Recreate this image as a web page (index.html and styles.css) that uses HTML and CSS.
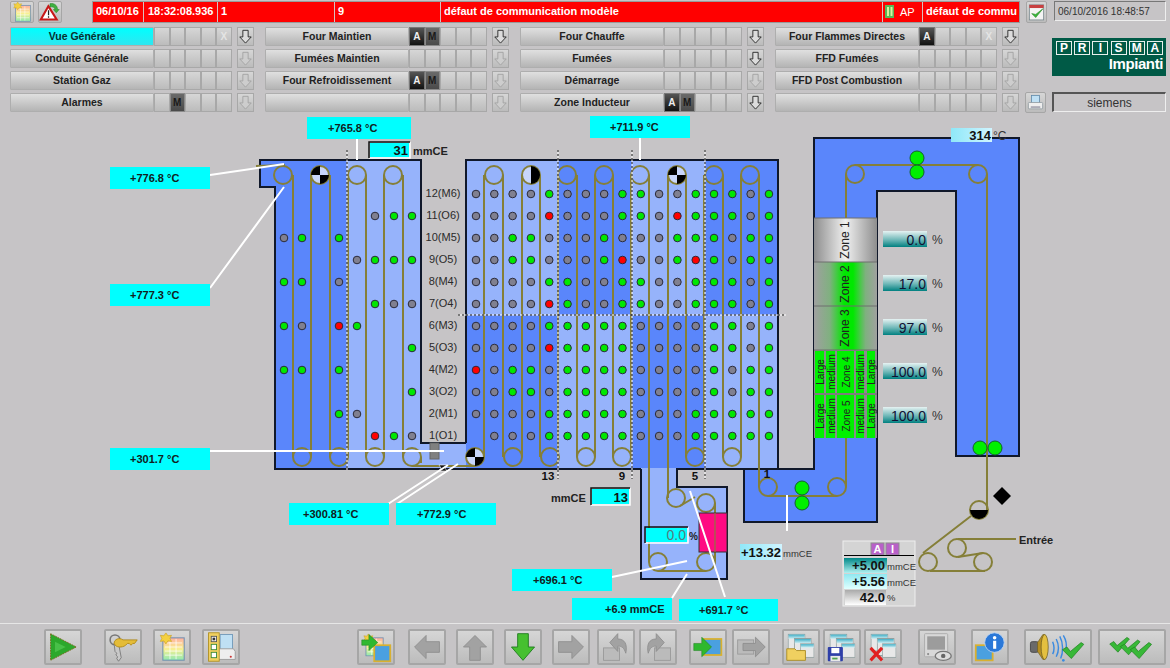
FILE: index.html
```html
<!DOCTYPE html>
<html lang="fr">
<head>
<meta charset="utf-8">
<title>Vue Générale</title>
<link rel="stylesheet" href="styles.css">
</head>
<body>
<svg class="defs" width="0" height="0" aria-hidden="true">
  <defs>
    <symbol id="down" viewBox="0 0 17 19"><path d="M5.5 2.5h6v7.5h3.5l-6.5 7-6.5-7h3.5z"/></symbol>
    <symbol id="tick" viewBox="0 0 26 20"><path d="M1 9l5-3 4 5L22 1l3 2L11 19z" fill="#38b838" stroke="#1f801f" stroke-width=".8"/></symbol>
    <linearGradient id="gZ1" x1="0" x2="1" y1="0" y2="0"><stop offset="0" stop-color="#8e8e8e"/><stop offset=".5" stop-color="#f0f0f0"/><stop offset="1" stop-color="#8e8e8e"/></linearGradient>
    <linearGradient id="gZ2" x1="0" x2="1" y1="0" y2="0"><stop offset="0" stop-color="#a0a0a0"/><stop offset=".25" stop-color="#80b080"/><stop offset=".48" stop-color="#00e800"/><stop offset=".62" stop-color="#00e800"/><stop offset=".82" stop-color="#80b080"/><stop offset="1" stop-color="#a0a0a0"/></linearGradient>
    <linearGradient id="gBar" x1="0" x2="0" y1="0" y2="1"><stop offset="0" stop-color="#e6f2f2"/><stop offset=".55" stop-color="#6fb8b8"/><stop offset="1" stop-color="#008080"/></linearGradient>
    <linearGradient id="gTeal" x1="0" x2="0" y1="0" y2="1"><stop offset="0" stop-color="#008888"/><stop offset="1" stop-color="#b0f0f0"/></linearGradient>
    <linearGradient id="gPale" x1="0" x2="0" y1="0" y2="1"><stop offset="0" stop-color="#90e8f0"/><stop offset="1" stop-color="#e0ffff"/></linearGradient>
    <linearGradient id="gGrey" x1="0" x2="0" y1="0" y2="1"><stop offset="0" stop-color="#aaaaaa"/><stop offset="1" stop-color="#ffffff"/></linearGradient>
    <linearGradient id="gSky" x1="0" x2="1" y1="0" y2="0"><stop offset="0" stop-color="#8fe8f8"/><stop offset="1" stop-color="#d0f4ff"/></linearGradient>
    <linearGradient id="gRain" x1="0" x2="0" y1="0" y2="1"><stop offset="0" stop-color="#ffb0a0"/><stop offset=".5" stop-color="#f8f090"/><stop offset="1" stop-color="#90e8b0"/></linearGradient>
    <linearGradient id="gWin" x1="0" x2="0" y1="0" y2="1"><stop offset="0" stop-color="#40b0c8"/><stop offset="1" stop-color="#d8f0f4"/></linearGradient>
    <symbol id="win" viewBox="0 0 20 20"><rect x=".5" y=".5" width="19" height="19" fill="#e8e8e8" stroke="#8a9a9a"/><rect x="1" y="1" width="18" height="5" fill="url(#gWin)"/></symbol>
    <symbol id="sheet" viewBox="0 0 26 28"><rect x="4" y="5" width="21" height="22" fill="url(#gRain)" stroke="#6f8fb0"/><path d="M6 10h17M6 14h17M6 18h17M6 22h17M11 6v20M17 6v20" stroke="#fff" fill="none" stroke-width=".7"/><path d="M7 0l2 3 3.500-.5-1.500 3 1.500 3-3.500-.5-2 3-2-3-3.500.5 1.500-3-1.500-3 3.500.5z" fill="#f4d040" stroke="#c8a020" stroke-width=".6"/></symbol>
  </defs>
</svg>

<header class="top">
  <div class="status">
    <button class="tool tiny first" aria-label="Liste">
      <svg viewBox="0 0 26 28"><use href="#sheet"/></svg>
    </button>
    <button class="tool tiny" aria-label="Alarme">
      <svg viewBox="0 0 24 24"><path d="M10 5L20 21H1z" fill="#fff" stroke="#c81818" stroke-width="2.500"/><path d="M9.500 10h1.500v6H9.500zM9.500 17h1.500v2H9.500z" fill="#222"/><path d="M12 2c5-1 9 2 9 7h2l-3.500 4-3.500-4h2c0-2-3-4-6-3z" fill="#40b040" stroke="#1f7f1f" stroke-width=".6"/></svg>
    </button>
    <div class="alarm">
      <span class="c1">06/10/16</span><span class="c2">18:32:08.936</span><span class="c3">1</span><span class="c4">9</span><span class="c5">défaut de communication modèle</span>
      <span class="c6"><svg class="plc" viewBox="0 0 9 15"><rect width="9" height="13" fill="#58b858"/><rect x="2" y="2" width="2" height="9" fill="#d8f0a0"/><rect x="5.500" y="2" width="2" height="9" fill="#d8f0a0"/></svg>AP</span>
      <span class="c7">défaut de commu</span>
    </div>
    <button class="tool tiny check" aria-label="Valider">
      <svg viewBox="0 0 24 24"><rect x="3" y="3" width="18" height="19" fill="#f4f4f4" stroke="#7a8a90"/><rect x="3" y="3" width="18" height="4" fill="#c84040"/><path d="M6 14l5 5 9-11-9 7z" fill="#38b838" stroke="#1f801f" stroke-width=".7"/></svg>
    </button>
    <div class="clock">06/10/2016 18:48:57</div>
  </div>

  <div class="lower">
    <nav class="nav">
      <div class="entry"><a class="name on">Vue Générale</a><span class="cell"></span><span class="cell"></span><span class="cell"></span><span class="cell"></span><span class="cell x">X</span><span class="arrow on"><svg><use href="#down"/></svg></span></div>
      <div class="entry"><a class="name">Four Maintien</a><span class="cell a">A</span><span class="cell m">M</span><span class="cell"></span><span class="cell"></span><span class="cell"></span><span class="arrow on"><svg><use href="#down"/></svg></span></div>
      <div class="entry"><a class="name">Four Chauffe</a><span class="cell"></span><span class="cell"></span><span class="cell"></span><span class="cell"></span><span class="cell"></span><span class="arrow on"><svg><use href="#down"/></svg></span></div>
      <div class="entry"><a class="name">Four Flammes Directes</a><span class="cell a">A</span><span class="cell"></span><span class="cell"></span><span class="cell"></span><span class="cell x">X</span><span class="arrow on"><svg><use href="#down"/></svg></span></div>

      <div class="entry"><a class="name">Conduite Générale</a><span class="cell"></span><span class="cell"></span><span class="cell"></span><span class="cell"></span><span class="cell"></span><span class="arrow"><svg><use href="#down"/></svg></span></div>
      <div class="entry"><a class="name">Fumées Maintien</a><span class="cell"></span><span class="cell"></span><span class="cell"></span><span class="cell"></span><span class="cell"></span><span class="arrow"><svg><use href="#down"/></svg></span></div>
      <div class="entry"><a class="name">Fumées</a><span class="cell"></span><span class="cell"></span><span class="cell"></span><span class="cell"></span><span class="cell"></span><span class="arrow on"><svg><use href="#down"/></svg></span></div>
      <div class="entry"><a class="name">FFD Fumées</a><span class="cell"></span><span class="cell"></span><span class="cell"></span><span class="cell"></span><span class="cell"></span><span class="arrow"><svg><use href="#down"/></svg></span></div>

      <div class="entry"><a class="name">Station Gaz</a><span class="cell"></span><span class="cell"></span><span class="cell"></span><span class="cell"></span><span class="cell"></span><span class="arrow"><svg><use href="#down"/></svg></span></div>
      <div class="entry"><a class="name">Four Refroidissement</a><span class="cell a">A</span><span class="cell m">M</span><span class="cell"></span><span class="cell"></span><span class="cell"></span><span class="arrow"><svg><use href="#down"/></svg></span></div>
      <div class="entry"><a class="name">Démarrage</a><span class="cell"></span><span class="cell"></span><span class="cell"></span><span class="cell"></span><span class="cell"></span><span class="arrow"><svg><use href="#down"/></svg></span></div>
      <div class="entry"><a class="name">FFD Post Combustion</a><span class="cell"></span><span class="cell"></span><span class="cell"></span><span class="cell"></span><span class="cell"></span><span class="arrow"><svg><use href="#down"/></svg></span></div>

      <div class="entry"><a class="name">Alarmes</a><span class="cell"></span><span class="cell m">M</span><span class="cell"></span><span class="cell"></span><span class="cell"></span><span class="arrow"><svg><use href="#down"/></svg></span></div>
      <div class="entry"><a class="name"></a><span class="cell"></span><span class="cell"></span><span class="cell"></span><span class="cell"></span><span class="cell"></span><span class="arrow"><svg><use href="#down"/></svg></span></div>
      <div class="entry"><a class="name">Zone Inducteur</a><span class="cell a">A</span><span class="cell m">M</span><span class="cell"></span><span class="cell"></span><span class="cell"></span><span class="arrow on"><svg><use href="#down"/></svg></span></div>
      <div class="entry"><a class="name"></a><span class="cell"></span><span class="cell"></span><span class="cell"></span><span class="cell"></span><span class="cell"></span><span class="arrow"><svg><use href="#down"/></svg></span></div>
    </nav>
    <div class="side">
      <div class="logo">
        <div class="logo-top"><span>P</span><span>R</span><span>I</span><span>S</span><span>M</span><span>A</span></div>
        <div class="logo-sub">Impianti</div>
      </div>
      <div class="printer-row">
        <button class="tool tiny" aria-label="Imprimer">
          <svg viewBox="0 0 24 24"><rect x="7" y="3" width="10" height="10" fill="#bfe0f4" stroke="#5f88a8"/><rect x="3" y="12" width="18" height="8" rx="1" fill="#eee" stroke="#8f9aa0"/><rect x="6" y="17" width="12" height="1.500" fill="#889"/></svg>
        </button>
        <div class="user">siemens</div>
      </div>
    </div>
  </div>
</header>

<main class="plant">
  <svg class="scheme" viewBox="0 115 1170 508" width="1170" height="508">
    <!-- furnace shells -->
    <path class="dark" d="M260 160H421V443H466V160H778V469H744V522H877V191H956V456H1019V138H814V469H778V469H677V487H727V579H641V469H275V187H260z"/>
    <path class="light" d="M347 160H421V443H466V469H347z"/>
    <rect class="light" x="466" y="160" width="92" height="155"/>
    <rect class="light" x="632" y="160" width="73" height="155"/>
    <rect class="light" x="558" y="315" width="74" height="154"/>
    <rect class="light" x="705" y="315" width="73" height="154"/>
    <path class="light" d="M641 468H677V487H727V579H641z"/>
    <path class="shell" d="M347 160H260V187H275V469H466M466 443H421V160H347M466 443V160H778V469H744V522H877V191H956V456H1019V138H814V469H778M641 469V579H727V487H677V469H744M466 469H641M558 469"/>

    <!-- strip path -->
    <g class="strip">
      <path d="M256 166L285 165M293 175V457M311 175V457M330 175V457M348 175V457M366 175V457M384 175V457M403 175V457M421 457V463"/>
      <path d="M412 466H475"/>
      <path d="M484 457V175M503 175V457M522 457V175M540 175V457M558 457V175M577 175V457M595 457V175M613 175V457M631 457V175"/>
      <path d="M649 175V562M668 175V498M686 175V457M704 457V175M723 175V457M741 457V175M759 175V487"/>
      <path d="M695 497L680 506M658 571H706M715 562V503"/>
      <path d="M768 496H837M846 487V174M855 165H978M987 174V510"/>
      <path d="M971 516L923 553M930 571H985M958 557L983 553M958 539H1016"/>
      <circle cx="283" cy="175" r="9"/><circle cx="357" cy="175" r="9"/><circle cx="393" cy="175" r="9"/>
      <circle cx="302" cy="457" r="9"/><circle cx="339" cy="457" r="9"/><circle cx="375" cy="457" r="9"/><circle cx="412" cy="457" r="9"/>
      <circle cx="494" cy="175" r="9"/><circle cx="567" cy="175" r="9"/><circle cx="604" cy="175" r="9"/><circle cx="640" cy="175" r="9"/><circle cx="714" cy="175" r="9"/><circle cx="750" cy="175" r="9"/>
      <circle cx="513" cy="457" r="9"/><circle cx="550" cy="457" r="9"/><circle cx="586" cy="457" r="9"/><circle cx="622" cy="457" r="9"/><circle cx="695" cy="457" r="9"/><circle cx="732" cy="457" r="9"/>
      <circle cx="676" cy="498" r="9"/><circle cx="706" cy="503" r="9"/><circle cx="658" cy="562" r="9"/><circle cx="706" cy="562" r="9"/>
      <circle cx="768" cy="487" r="9"/><circle cx="837" cy="487" r="9"/><circle cx="855" cy="174" r="9"/><circle cx="978" cy="174" r="9"/>
      <circle cx="979" cy="510" r="9"/><circle cx="928" cy="562" r="9"/><circle cx="983" cy="562" r="9"/><circle cx="957" cy="548" r="9"/>
    </g>

    <!-- state rollers -->
    <g class="roll">
      <circle cx="320" cy="175" r="9"/><path class="blk" d="M320 175V166A9 9 0 0 0 311 175zM320 175V184A9 9 0 0 0 329 175z"/>
      <circle cx="677" cy="175" r="9"/><path class="blk" d="M677 175V166A9 9 0 0 0 668 175zM677 175V184A9 9 0 0 0 686 175z"/>
      <circle cx="475" cy="457" r="9"/><path class="blk" d="M475 457V448A9 9 0 0 0 466 457zM475 457V466A9 9 0 0 0 484 457z"/>
      <circle cx="531" cy="175" r="9"/><path class="blk" d="M531 166A9 9 0 0 1 531 184z"/>
      <path class="blk" d="M970 510H988A9 9 0 0 1 970 510z"/>
    </g>

    <rect class="stub" x="430" y="443" width="9" height="16"/>
    <path class="mark" d="M439 465h8l-2 3 2 3h-8l2-3z"/>
    <rect class="pink" x="699" y="513" width="28" height="39"/>
    <path class="strip thin" d="M715 513V552"/>

    <!-- lamps -->
    <g id="lamps"></g>

    <!-- section dividers -->
    <g class="rule w"><path d="M347 150V470M558 150V479M632 150V479M705 150V479M458 315H786"/></g>
    <g class="rule k"><path d="M347 150V470M558 150V479M632 150V479M705 150V479M458 315H786"/></g>

    <!-- big lamps, diamond -->
    <g class="big">
      <circle cx="917" cy="158" r="7"/><circle cx="917" cy="172" r="7"/><circle cx="980" cy="448" r="7"/><circle cx="995" cy="448" r="7"/><circle cx="802" cy="488" r="7"/><circle cx="802" cy="503" r="7"/>
    </g>
    <path class="ink" d="M1002 487l9 9-9 9-9-9z"/>

    <!-- zones -->
    <g class="zones">
      <rect x="814" y="218" width="63" height="44" fill="url(#gZ1)"/>
      <rect x="814" y="262" width="63" height="44" fill="url(#gZ2)"/>
      <rect x="814" y="306" width="63" height="44" fill="url(#gZ2)"/>
      <rect class="gap" x="814" y="350" width="63" height="88"/>
      <g class="lime">
        <rect x="815" y="351" width="9" height="42"/><rect x="826" y="351" width="9" height="42"/><rect x="837" y="351" width="17" height="42"/><rect x="856" y="351" width="8" height="42"/><rect x="867" y="351" width="8" height="42"/>
        <rect x="815" y="395" width="9" height="43"/><rect x="826" y="395" width="9" height="43"/><rect x="837" y="395" width="17" height="43"/><rect x="856" y="395" width="8" height="43"/><rect x="867" y="395" width="8" height="43"/>
      </g>
      <path class="seam" d="M814 218H877M814 262H877M814 306H877M814 350H877M814 394H877"/>
      <g class="ztext big-z">
        <text x="845" y="240" transform="rotate(-90 845 240)">Zone 1</text>
        <text x="845" y="284" transform="rotate(-90 845 284)">Zone 2</text>
        <text x="845" y="328" transform="rotate(-90 845 328)">Zone 3</text>
      </g>
      <g class="ztext">
        <text x="820" y="372" transform="rotate(-90 820 372)">Large</text><text x="831" y="372" transform="rotate(-90 831 372)">medium</text><text x="846" y="372" transform="rotate(-90 846 372)">Zone 4</text><text x="860" y="372" transform="rotate(-90 860 372)">medium</text><text x="871" y="372" transform="rotate(-90 871 372)">Large</text>
        <text x="820" y="416" transform="rotate(-90 820 416)">Large</text><text x="831" y="416" transform="rotate(-90 831 416)">medium</text><text x="846" y="416" transform="rotate(-90 846 416)">Zone 5</text><text x="860" y="416" transform="rotate(-90 860 416)">medium</text><text x="871" y="416" transform="rotate(-90 871 416)">Large</text>
      </g>
    </g>

    <!-- zone percentages -->
    <g class="pct">
      <rect x="883" y="231" width="44" height="16" fill="url(#gBar)"/><text class="val" x="926" y="240">0.0</text><text class="unit" x="932" y="240">%</text>
      <rect x="883" y="275" width="44" height="16" fill="url(#gBar)"/><text class="val" x="926" y="284">17.0</text><text class="unit" x="932" y="284">%</text>
      <rect x="883" y="319" width="44" height="16" fill="url(#gBar)"/><text class="val" x="926" y="328">97.0</text><text class="unit" x="932" y="328">%</text>
      <rect x="883" y="363" width="44" height="16" fill="url(#gBar)"/><text class="val" x="926" y="372">100.0</text><text class="unit" x="932" y="372">%</text>
      <rect x="883" y="407" width="44" height="16" fill="url(#gBar)"/><text class="val" x="926" y="416">100.0</text><text class="unit" x="932" y="416">%</text>
    </g>

    <!-- level names -->
    <g class="levels">
      <text x="443" y="193">12(M6)</text><text x="443" y="215">11(O6)</text><text x="443" y="237">10(M5)</text><text x="443" y="259">9(O5)</text><text x="443" y="281">8(M4)</text><text x="443" y="303">7(O4)</text><text x="443" y="325">6(M3)</text><text x="443" y="347">5(O3)</text><text x="443" y="369">4(M2)</text><text x="443" y="391">3(O2)</text><text x="443" y="413">2(M1)</text><text x="443" y="435">1(O1)</text>
    </g>

    <!-- leaders -->
    <path class="leader" d="M210 175L284 164M210 288L284 187M357 139V160M640 138V160M210 451H444M388 504L448 465M397 504L458 464M612 577L687 561M672 598L687 574M725 597L690 491M787 495V531"/>

    <!-- cyan tags -->
    <g class="tag">
      <rect x="307" y="117" width="104" height="22"/><text x="328" y="128">+765.8 °C</text>
      <rect x="110" y="167" width="100" height="22"/><text x="130" y="178">+776.8 °C</text>
      <rect x="110" y="284" width="100" height="22"/><text x="130" y="295">+777.3 °C</text>
      <rect x="590" y="116" width="100" height="22"/><text x="610" y="127">+711.9 °C</text>
      <rect x="110" y="448" width="100" height="22"/><text x="130" y="459">+301.7 °C</text>
      <rect x="289" y="503" width="100" height="22"/><text x="303" y="514">+300.81 °C</text>
      <rect x="396" y="503" width="100" height="22"/><text x="417" y="514">+772.9 °C</text>
      <rect x="512" y="569" width="100" height="22"/><text x="533" y="580">+696.1 °C</text>
      <rect x="572" y="598" width="100" height="22"/><text x="605" y="609">+6.9 mmCE</text>
      <rect x="679" y="599" width="99" height="22"/><text x="699" y="610">+691.7 °C</text>
    </g>

    <!-- readouts -->
    <g class="box"><path class="lo" d="M369 158H410V142"/><rect x="370" y="143" width="39" height="14"/><path class="hi" d="M369 158V142H410"/></g>
    <text class="num" x="408" y="150">31</text><text class="tiny-b" x="413" y="151">mmCE</text>

    <g class="box"><path class="lo" d="M591 505H630V488"/><rect x="592" y="489" width="37" height="15"/><path class="hi" d="M591 505V488H630"/></g>
    <text class="num" x="628" y="497">13</text><text class="tiny-b" x="551" y="498">mmCE</text>

    <g class="box"><path class="lo" d="M645 543H688V527"/><rect x="646" y="528" width="41" height="14"/><path class="hi" d="M645 543V527H688"/></g>
    <text class="num faint" x="686" y="535">0.0</text><text class="tiny-b small" x="689" y="536">%</text>

    <rect x="740" y="544" width="42" height="16" fill="url(#gSky)"/><text class="num" x="781" y="552">+13.32</text><text class="tiny-r" x="783" y="553">mmCE</text>
    <rect x="951" y="128" width="41" height="14" fill="url(#gSky)"/><text class="num" x="991" y="135">314</text><text class="unit" x="993" y="136">°C</text>

    <g class="cut"><text x="548" y="476">13</text><text x="622" y="476">9</text><text x="695" y="476">5</text><text x="767" y="474">1</text></g>
    <text class="tiny-b entree" x="1019" y="540">Entrée</text>

    <!-- small control panel -->
    <rect class="panel" x="843" y="541" width="72" height="65"/>
    <g class="mode"><rect x="871" y="543" width="13" height="12"/><rect x="886" y="543" width="13" height="12"/><text x="877.500" y="549">A</text><text x="892.500" y="549">I</text></g>
    <path class="ink-line" d="M844 555.500H914"/>
    <rect x="844" y="558" width="43" height="15" fill="url(#gTeal)"/>
    <rect x="844" y="574" width="43" height="15" fill="url(#gPale)"/>
    <rect x="845" y="590" width="41" height="15" fill="url(#gGrey)"/>
    <text class="num" x="885" y="565">+5.00</text><text class="tiny-r" x="887" y="566">mmCE</text>
    <text class="num" x="885" y="581">+5.56</text><text class="tiny-r" x="887" y="582">mmCE</text>
    <text class="num" x="885" y="597">42.0</text><text class="tiny-r" x="887" y="597">%</text>
  </svg>
</main>

<footer class="bar">
  <div class="grp g1">
    <button class="tool" aria-label="Démarrer"><svg viewBox="0 0 38 36"><path d="M5 3L34 18 5 33z" fill="#2ca82c" stroke="#7a6a20" stroke-width="1" stroke-dasharray="2 1"/><path d="M10 12L22 18 10 24z" fill="#48c048"/></svg></button>
  </div>
  <div class="grp g2">
    <button class="tool" aria-label="Clés"><svg viewBox="0 0 38 36"><circle cx="10" cy="10" r="5.500" fill="none" stroke="#777" stroke-width="1.800"/><path d="M9 14h5l3 16-3 4-2-3 1-2-2-2 1-2-2-2z" fill="#c8c8c8" stroke="#666" stroke-width=".8"/><path d="M9 14c0-5 6-7 10-4h16l-3 4h-2l-2 2-2-2h-2l-2 2c-4 3-11 3-13-2z" fill="#e4bc38" stroke="#b08a18"/></svg></button>
    <button class="tool" aria-label="Liste"><svg viewBox="0 0 38 36"><use href="#sheet" x="4" y="2" width="30" height="32"/></svg></button>
    <button class="tool" aria-label="Impression"><svg viewBox="0 0 38 36"><rect x="18" y="4" width="14" height="18" fill="#bfe0f4" stroke="#6f98b8"/><path d="M14 20h19l2 3v9H14z" fill="#eee" stroke="#999"/><circle cx="30" cy="29" r="1.200" fill="#c33"/><rect x="5" y="2" width="12" height="32" fill="#f0d060" stroke="#b09020"/><rect x="8" y="6" width="6" height="6" fill="#fff" stroke="#555"/><rect x="9.500" y="7.500" width="3" height="3" fill="#333"/><rect x="8" y="15" width="6" height="6" fill="#fff" stroke="#3a8a3a"/><rect x="8" y="24" width="6" height="6" fill="#fff" stroke="#3a8a3a"/></svg></button>
  </div>
  <div class="grp g3">
    <button class="tool" aria-label="Changer de vue"><svg viewBox="0 0 38 36"><use href="#sheet" x="4" y="3" width="24" height="26"/><rect x="17" y="16" width="18" height="18" fill="#4aa0e0" stroke="#d8b030" stroke-width="2"/><path d="M3 10h8V4l10 9-10 9v-6H3z" fill="#2fb82f" stroke="#1f801f" stroke-width=".6"/></svg></button>
  </div>
  <div class="grp g4">
    <button class="tool off" aria-label="Gauche"><svg viewBox="0 0 38 36"><path d="M33 12H18V5L5 18l13 13v-7h15z"/></svg></button>
    <button class="tool off" aria-label="Haut"><svg viewBox="0 0 38 36"><path d="M13 33V18H6L19 5l13 13h-7v15z"/></svg></button>
    <button class="tool go" aria-label="Bas"><svg viewBox="0 0 38 36"><path d="M13 3v15H6l13 15 13-15h-7V3z"/></svg></button>
    <button class="tool off" aria-label="Droite"><svg viewBox="0 0 38 36"><path d="M5 12h15V5l13 13-13 13v-7H5z"/></svg></button>
  </div>
  <div class="grp g5">
    <button class="tool off" aria-label="Annuler"><svg viewBox="0 0 38 36"><rect x="5" y="19" width="18" height="14" fill="#bbb" stroke="#999"/><path d="M12 13l9-10v6c8 0 11 6 9 16-2-6-4-8-9-8v6z"/></svg></button>
    <button class="tool off" aria-label="Rétablir"><svg viewBox="0 0 38 36"><rect x="15" y="19" width="18" height="14" fill="#bbb" stroke="#999"/><path d="M26 13L17 3v6C9 9 6 15 8 25c2-6 4-8 9-8v6z"/></svg></button>
  </div>
  <div class="grp g6">
    <button class="tool" aria-label="Sortie"><svg viewBox="0 0 38 36"><rect x="14" y="9" width="20" height="18" fill="#4aa0e0" stroke="#d8b030" stroke-width="2"/><path d="M3 14h9V7l11 11-11 11v-7H3z" fill="#2fb82f" stroke="#1f801f" stroke-width=".6"/></svg></button>
    <button class="tool off" aria-label="Suivant"><svg viewBox="0 0 38 36"><rect x="4" y="10" width="18" height="16" fill="#bbb" stroke="#999"/><path d="M10 14h14V7l11 11-11 11v-7H10z"/></svg></button>
  </div>
  <div class="grp g7">
    <button class="tool" aria-label="Ouvrir"><svg viewBox="0 0 38 36"><use href="#win" x="4" y="3" width="20" height="20"/><use href="#win" x="11" y="8" width="20" height="20"/><use href="#win" x="18" y="13" width="16" height="18"/><path d="M3 20h9l2 2h10v11H3z" fill="#f0d060" stroke="#a88a20"/></svg></button>
    <button class="tool" aria-label="Enregistrer"><svg viewBox="0 0 38 36"><use href="#win" x="5" y="3" width="20" height="20"/><use href="#win" x="12" y="8" width="20" height="20"/><use href="#win" x="18" y="13" width="16" height="18"/><rect x="3" y="18" width="17" height="16" rx="1" fill="#2f3fa8"/><rect x="7" y="19" width="9" height="6" fill="#fff"/><rect x="6" y="28" width="11" height="6" fill="#e8e8e8"/><rect x="8" y="30" width="6" height="2" fill="#50a050"/></svg></button>
    <button class="tool" aria-label="Supprimer"><svg viewBox="0 0 38 36"><use href="#win" x="5" y="3" width="20" height="20"/><use href="#win" x="12" y="8" width="20" height="20"/><use href="#win" x="18" y="13" width="16" height="18"/><path d="M5 19l13 14M18 19L5 33" stroke="#e02020" stroke-width="3.500" fill="none"/></svg></button>
  </div>
  <div class="grp g8">
    <button class="tool" aria-label="Écran"><svg viewBox="0 0 38 36"><rect x="5" y="3" width="26" height="26" rx="1" fill="#d8d8d8" stroke="#aaa"/><rect x="8" y="6" width="20" height="15" fill="#9c9c9c"/><ellipse cx="26" cy="28" rx="9" ry="5" fill="#ddd" stroke="#777" stroke-width="1.500"/><circle cx="26" cy="28" r="2.500" fill="#666"/><circle cx="9" cy="26" r="1.200" fill="#888"/></svg></button>
  </div>
  <div class="grp g9">
    <button class="tool" aria-label="Information"><svg viewBox="0 0 38 36"><rect x="3" y="16" width="19" height="17" fill="#4aa0e0" stroke="#d8b030" stroke-width="2"/><circle cx="24" cy="13" r="11" fill="#2a78d8" stroke="#bcd4f0"/><rect x="22.500" y="11" width="3.500" height="9" fill="#fff"/><circle cx="24.200" cy="7.500" r="2" fill="#fff"/></svg></button>
  </div>
  <div class="grp g10">
    <button class="tool wide" aria-label="Son"><svg viewBox="0 0 68 36"><rect x="3" y="12" width="9" height="12" rx="2" fill="#6a6a6a" stroke="#444"/><path d="M11 13l6-9h2v28h-2l-6-9z" fill="#b89020" stroke="#6a5a20" stroke-width=".7"/><ellipse cx="19" cy="18" rx="4" ry="14" fill="#e4c040" stroke="#6a5a20" stroke-width=".8"/><g fill="none" stroke="#3a8ae0" stroke-width="1.600"><path d="M28 12c2 5 2 10 0 14M32 9c3 6 3 14 0 20M36 6c4 7 4 18 1 25M40 5c3 5 4 11 3 16"/></g><use href="#tick" x="38" y="12" width="26" height="20"/><circle cx="40" cy="33" r="1.500" fill="#3a8ae0"/></svg></button>
    <button class="tool wide" aria-label="Acquitter"><svg viewBox="0 0 68 36"><use href="#tick" x="8" y="6" width="24" height="19"/><use href="#tick" x="20" y="9" width="24" height="19"/><use href="#tick" x="31" y="12" width="26" height="20"/></svg></button>
  </div>
</footer>
<script src="lamps.js"></script>
</body>
</html>
```

FILE: styles.css
```css
* { box-sizing: border-box; }
html, body { margin: 0; height: 100%; }
body {
  width: 1170px;
  height: 668px;
  overflow: hidden;
  background: #c6c4c6;
  font-family: "Liberation Sans", Arial, sans-serif;
  color: #222;
  display: flex;
  flex-direction: column;
}
.defs { position: absolute; }

button { padding: 0; font: inherit; cursor: default; }

.tool {
  display: block;
  width: 38px;
  height: 36px;
  background: linear-gradient(#d6d6d6, #bcbcbc);
  border: 2px solid #a6a6a6;
  border-radius: 2px;
}
.tool svg { display: block; width: 100%; height: 100%; }
.tool.tiny { width: 24px; height: 22px; border-width: 1px; flex: none; }
.tool.wide { width: 68px; }
.tool.off svg path { fill: #a2a2a2; stroke: #8e8e8e; }
.tool.go svg path { fill: #46c030; stroke: #1c7a1c; }

.top { height: 115px; flex: none; }
.status { display: flex; align-items: flex-start; height: 27px; padding: 1px 0 0 10px; }
.status .tiny + .tiny { margin-left: 4px; }
.alarm {
  display: flex;
  width: 926px;
  height: 20px;
  margin: 1px 0 0 31px;
  background: #ff0000;
  color: #fff;
  font-size: 11px;
  font-weight: bold;
  line-height: 19px;
  box-shadow: 0 0 0 1px #9a9a9a;
}
.alarm span {
  flex: none;
  padding-left: 3px;
  white-space: nowrap;
  border-left: 1px solid #d8c0c0;
}
.alarm .c1 { width: 50px; border-left: 0; }
.alarm .c2 { width: 74px; padding-left: 4px; }
.alarm .c3 { width: 117px; padding-left: 3px; }
.alarm .c4 { width: 106px; }
.alarm .c5 { width: 442px; }
.alarm .c6 { width: 40px; display: flex; align-items: center; gap: 6px; padding-left: 2px; font-weight: normal; }
.alarm .c7 { width: 97px; }
.plc { width: 9px; height: 15px; flex: none; }
.status .tool.check { width: 21px; margin-left: 7px; }
.clock {
  width: 112px;
  height: 20px;
  margin-left: 7px;
  padding-left: 3px;
  font-size: 10px;
  line-height: 20px;
  color: #333;
  border: 1px solid;
  border-color: #777 #eee #eee #777;
}

.lower { display: flex; }
.nav {
  display: grid;
  grid-template-columns: repeat(4, 244px);
  grid-auto-rows: 19px;
  column-gap: 11px;
  row-gap: 3px;
  margin-left: 10px;
}
.entry { display: flex; align-items: stretch; }
.name {
  display: block;
  width: 144px;
  flex: none;
  text-align: center;
  font-size: 10.5px;
  font-weight: bold;
  line-height: 17px;
  color: #222;
  background: linear-gradient(#e0e0e0, #b4b4b4);
  border: 1px solid #aeaeae;
  border-radius: 1px;
}
.name.on {
  background: linear-gradient(#00ffff, #30e6f0);
  color: #053030;
}
.cell {
  display: block;
  flex: none;
  width: 15.5px;
  text-align: center;
  font-size: 10px;
  font-weight: bold;
  line-height: 17px;
  background: linear-gradient(#d6d6d6, #bcbcbc);
  border: 1px solid #a8a8a8;
}
.cell.x { color: #e4e4e4; }
.cell.a { background: linear-gradient(#555, #111); color: #eee; border-color: #777; }
.cell.m { background: linear-gradient(#6a6a6a, #4a4a4a); color: #1a1a1a; border-color: #8a8a8a; }
.arrow {
  display: block;
  flex: none;
  width: 17px;
  margin-left: 5.500px;
  background: linear-gradient(#d6d6d6, #bcbcbc);
  border: 1px solid #a8a8a8;
}
.arrow svg { display: block; width: 15px; height: 17px; fill: #cdcdcd; stroke: #a2a2a2; }
.arrow.on svg { fill: #dcdcdc; stroke: #222; }

.side { width: 143px; margin-left: 8px; display: flex; flex-direction: column; align-items: flex-end; }
.logo {
  width: 114px;
  height: 38px;
  margin-top: 11px;
  margin-right: 4px;
  padding: 3px 3px 0 4px;
  background: #005a46;
  color: #fff;
}
.logo-top { display: flex; justify-content: space-between; }
.logo-top span {
  width: 16px;
  height: 14px;
  text-align: center;
  font-size: 12px;
  font-weight: bold;
  line-height: 13px;
  border: 1px solid #e8f0ec;
}
.logo-sub { text-align: right; font-size: 15px; font-weight: bold; line-height: 17px; letter-spacing: -.4px; }
.printer-row { display: flex; align-items: flex-start; margin-top: 16px; margin-right: 4px; }
.user {
  width: 114px;
  height: 20px;
  margin-left: 2px;
  text-align: center;
  font-size: 12px;
  line-height: 18px;
  color: #333;
  border: 1px solid;
  border-color: #555 #eee #eee #555;
  border-width: 2px 1px 1px 2px;
}
.printer-row .tool.tiny { width: 21px; height: 21px; margin-right: 4px; }

.plant { flex: 1; min-height: 0; }
.scheme { display: block; }
.scheme text { dominant-baseline: central; font-family: "Liberation Sans", Arial, sans-serif; }

.dark { fill: #5a86fb; }
.light { fill: #96b3fb; }
.shell { fill: none; stroke: #10182a; stroke-width: 2; }
.strip, .strip path, .strip circle { fill: none; stroke: #857f38; stroke-width: 2; }
.strip.thin { stroke-width: 1.500; opacity: .75; }
.roll circle { fill: #c8d6fa; stroke: #857f38; stroke-width: 2; }
.blk { fill: #000; stroke: none; }
.stub { fill: #808080; stroke: #666; }
.mark { fill: #111; stroke: #fff; stroke-width: .6; }
.pink { fill: #ff0a82; stroke: #333; }
.lamp { stroke: #2a2a3a; stroke-width: 1; }
.lamp.g { fill: #808090; }
.lamp.n { fill: #00e800; }
.lamp.r { fill: #ff0000; }
.rule path { fill: none; stroke-width: 1; }
.rule.w path { stroke: #fff; }
.rule.k path { stroke: #111; stroke-dasharray: 2 2; }
.big circle { fill: #00f000; stroke: #14602a; stroke-width: 1; }
.ink { fill: #000; }
.ink-line { stroke: #000; stroke-width: 1; fill: none; }

.gap { fill: #8c8c8c; }
.lime rect { fill: #00f000; }
.seam { fill: none; stroke: #6e6e6e; stroke-width: 1; }
.ztext text { text-anchor: middle; font-size: 10px; fill: #222; }
.ztext.big-z text { font-size: 12px; }

.val { text-anchor: end; font-size: 14px; fill: #113; }
.unit { font-size: 12px; fill: #333; }
.levels text { text-anchor: middle; font-size: 11px; fill: #2a2a2a; }
.leader { fill: none; stroke: #fff; stroke-width: 2; }
.tag rect { fill: #00ffff; }
.tag text { font-size: 11px; font-weight: bold; fill: #102020; }
.box rect { fill: #00ffff; }
.box .lo { fill: none; stroke: #fff; stroke-width: 1.500; }
.box .hi { fill: none; stroke: #111; stroke-width: 1.500; }
.num { text-anchor: end; font-size: 13px; font-weight: bold; fill: #111; }
.num.faint { font-weight: normal; fill: #557a80; font-size: 14px; }
.tiny-b { font-size: 11px; font-weight: bold; fill: #222; }
.tiny-b.small { font-size: 10px; }
.tiny-r { font-size: 9.500px; fill: #333; }
.cut text { text-anchor: middle; font-size: 11.500px; font-weight: bold; fill: #111; }
.entree { fill: #222; }
.panel { fill: #d4d4d4; stroke: #eee; stroke-width: 1; }
.mode rect { fill: #b860c8; stroke: #8f8f8f; }
.mode text { text-anchor: middle; font-size: 11px; font-weight: bold; fill: #fff; }

.bar {
  flex: none;
  height: 45px;
  display: flex;
  align-items: flex-start;
  padding: 5px 0 0 44px;
  border-top: 1px solid #e6e6e6;
  background: #c6c4c6;
}
.grp { display: flex; }
.g2 { margin-left: 22px; gap: 11px; }
.g3 { margin-left: 117px; }
.g4 { margin-left: 13px; gap: 10px; }
.g5 { margin-left: 7px; gap: 4px; }
.g6 { margin-left: 12px; gap: 5px; }
.g7 { margin-left: 12px; gap: 3px; }
.g8 { margin-left: 16px; }
.g9 { margin-left: 15px; }
.g10 { margin-left: 15px; gap: 6px; }
```

FILE: lamps.js
```javascript
// Row states: g = idle (grey), n = running (green), r = fault (red), . = no lamp
var LEFT_X = [284, 302, 320, 339, 357, 375, 394, 412];
var LEFT = [
  "........", ".....gnn", "gn.n....", "....gnnn", "nn.g....", ".....ngg",
  "ng.rn...", ".......n", "nn.n....", ".......n", "...ng...", ".....rng"
];
var RIGHT = [
  "ggggngggnnggnnngn", "ggggrgggnngrnnngn", "ggnngggngggnnngnn", "ggnngggnrggnrngnn",
  "ggggnnggnnggnnngn", "ggggrnggnnggnnngn", "ggggnnnnnggggnngn", "ggggrnnnnggggnngn",
  "rgnngnnnnggggngnn", "ggnngnnnnggggngnn", "ggggnnnnngggnnnnn", ".gggnnnnngggnnnnn"
];
var NS = "http://www.w3.org/2000/svg";
var host = document.getElementById("lamps");
function lamp(x, y, s) {
  if (s === ".") return;
  var c = document.createElementNS(NS, "circle");
  c.setAttribute("cx", x);
  c.setAttribute("cy", y);
  c.setAttribute("r", 3.8);
  c.setAttribute("class", "lamp " + s);
  host.appendChild(c);
}
for (var r = 0; r < 12; r++) {
  var y = 194 + r * 22;
  for (var i = 0; i < 8; i++) lamp(LEFT_X[i], y, LEFT[r][i]);
  for (var j = 0; j < 17; j++) lamp(476 + j * 18.31, y, RIGHT[r][j]);
}
```
